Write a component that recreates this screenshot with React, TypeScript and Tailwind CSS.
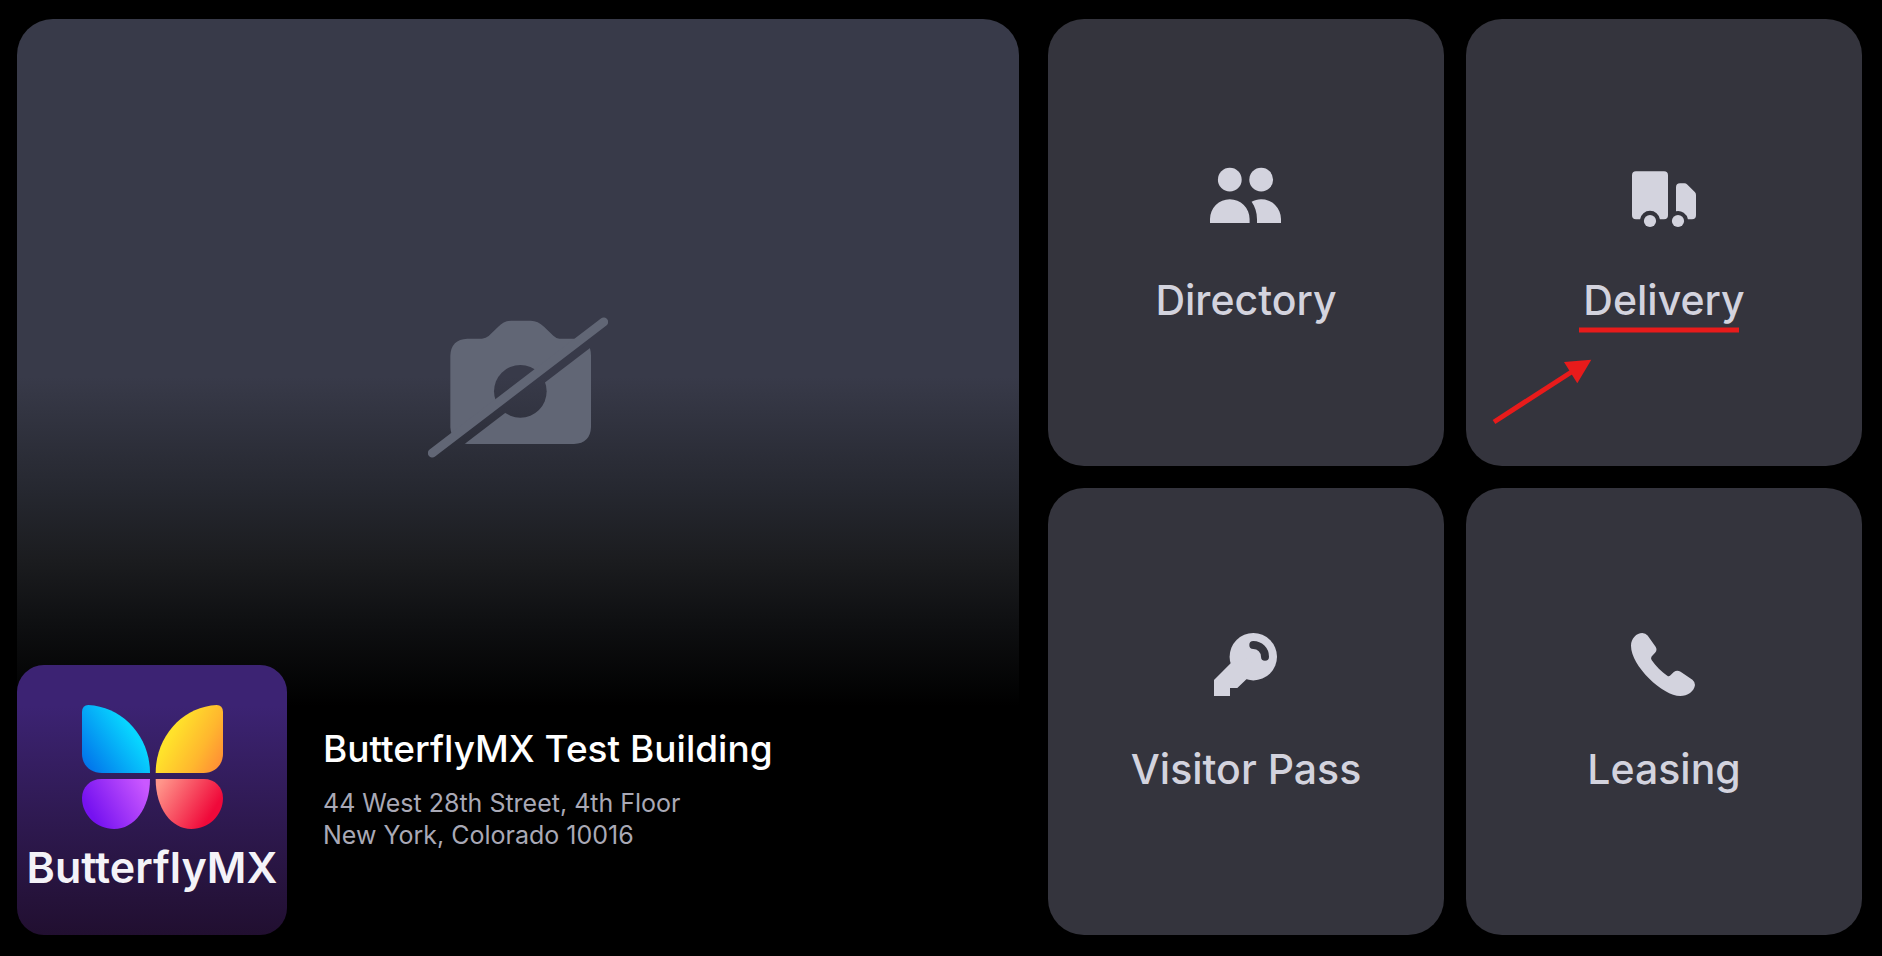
import type { ReactNode } from "react";

function CameraOffIcon() {
  return (
    <svg viewBox="54 51 540 423" className="h-[141px] w-[180px]" aria-hidden="true">
      <mask id="camera-cut" maskUnits="userSpaceOnUse" x="0" y="0" width="660" height="510">
        <rect width="660" height="510" fill="white" />
        <circle cx="331" cy="274" r="79" fill="black" />
        <path d="M28 512.5L620 59.5" stroke="black" strokeWidth="37" />
      </mask>
      <path
        mask="url(#camera-cut)"
        fill="#616675"
        d="M172 116H216Q228 115 236 108L264 81Q282 62 304 62H362Q384 62 402 80L430 107Q438 115 448 116H492Q543 118 543 167V382Q541 430 492 432H172Q124 430 121 382V167Q123 118 172 116Z"
      />
      <path d="M67 459L581 66" stroke="#616675" strokeWidth="27" strokeLinecap="round" />
    </svg>
  );
}

function ButterflyLogo() {
  return (
    <svg viewBox="243 165 423 372" className="h-[124px] w-[141px]" aria-hidden="true">
      <defs>
        <linearGradient id="wing-blue" gradientUnits="userSpaceOnUse" x1="250" y1="345" x2="395" y2="245">
          <stop offset="0" stopColor="#0273eb" />
          <stop offset="1" stopColor="#08d5ff" />
        </linearGradient>
        <linearGradient id="wing-yellow" gradientUnits="userSpaceOnUse" x1="515" y1="245" x2="665" y2="325">
          <stop offset="0" stopColor="#ffe22b" />
          <stop offset="0.6" stopColor="#ffb72e" />
          <stop offset="1" stopColor="#ff9134" />
        </linearGradient>
        <linearGradient id="wing-purple" gradientUnits="userSpaceOnUse" x1="270" y1="490" x2="430" y2="400">
          <stop offset="0" stopColor="#7612f0" />
          <stop offset="1" stopColor="#ca58ff" />
        </linearGradient>
        <linearGradient id="wing-red" gradientUnits="userSpaceOnUse" x1="480" y1="395" x2="632" y2="490">
          <stop offset="0" stopColor="#ff958a" />
          <stop offset="1" stopColor="#f0093a" />
        </linearGradient>
      </defs>
      <path fill="url(#wing-blue)" d="M243 185Q244 166 262 165C364 170 447 258 447 369H303C268 369 243 345 243 311Z" />
      <path fill="url(#wing-yellow)" d="M666 185Q665 166 647 165C546 170 464 258 464 369H608C641 369 666 345 666 311Z" />
      <path fill="url(#wing-purple)" d="M447 387C447 475 400 537 339 537C287 537 243 495 243 444C243 411 268 387 301 387Z" />
      <path fill="url(#wing-red)" d="M464 387C464 475 511 537 571 537C623 537 666 495 666 444C666 411 641 387 609 387Z" />
    </svg>
  );
}

function TileIcon({ children }: { children: ReactNode }) {
  return (
    <svg viewBox="0 0 96 96" className="size-24" fill="currentColor" aria-hidden="true">
      {children}
    </svg>
  );
}

const peopleIcon = (
  <TileIcon>
    <circle cx="31.8" cy="31.7" r="11.9" />
    <circle cx="63.2" cy="31.7" r="11.9" />
    <path d="M12 75V71A19.8 19.8 0 0 1 51.6 71V75Z" />
    <path d="M59 75V71.3C59 64.5 57 58.5 53.6 53.8C56.5 52.2 59.6 51.3 63 51.3A19.8 19.8 0 0 1 83 71V75Z" />
  </TileIcon>
);

const truckIcon = (
  <TileIcon>
    <path d="M20 23.3H48A4 4 0 0 1 52 27.3V67.3A4 4 0 0 1 48 71.3H43.9A10 10 0 0 0 24.1 71.3H20A4 4 0 0 1 16 67.3V27.3A4 4 0 0 1 20 23.3Z" />
    <path d="M60 63.2V39.3A4 4 0 0 1 64 35.3H68.4Q70 35.3 71.2 36.5L78.8 44.1Q80 45.3 80 46.9V67.3A4 4 0 0 1 76 71.3H71.9A10 10 0 0 0 60 63.2Z" />
    <circle cx="34" cy="73" r="6.1" />
    <circle cx="62" cy="73" r="6.1" />
  </TileIcon>
);

const keyIcon = (
  <TileIcon>
    <circle cx="55.3" cy="39.7" r="23.7" />
    <path d="M32.7 46.3L16 63V79H32V71H39.3L48.7 62L55 40Z" />
    <path d="M55.3 28A11.7 11.7 0 0 1 67 39.7" fill="none" stroke="#34343d" strokeWidth="8" strokeLinecap="round" />
  </TileIcon>
);

const phoneIcon = (
  <TileIcon>
    <path d="M26.3 16Q29.6 16 31.6 18.6L39.6 29.8Q41.5 32.8 39.3 35.6L35.6 39.4Q34.5 40.9 35.6 42.9C39.8 49.2 45.6 54.8 51.3 58.7Q52.8 59.8 54.2 58.6L57.8 55.1Q61 52.4 64.6 54.8L76.4 62.7Q79 64.8 79 68C78.2 74.5 71.5 79 64.3 79C47 79 15 49 15 28.7C15 21.5 20.5 16 26.3 16Z" />
  </TileIcon>
);

function DeliveryMarkup() {
  return (
    <svg viewBox="0 0 396 447" className="pointer-events-none absolute inset-0 size-full" aria-hidden="true">
      <path d="M113 311H273" stroke="#e81b1b" strokeWidth="5" />
      <path d="M28 403L107 352" stroke="#e81b1b" strokeWidth="5" />
      <path d="M125.3 340.7L98 343L111.3 364.3Z" fill="#e81b1b" />
    </svg>
  );
}

function ActionTile({ icon, label, children }: { icon: ReactNode; label: string; children?: ReactNode }) {
  return (
    <button
      type="button"
      className="relative flex flex-col items-center justify-center gap-8 rounded-[36px] bg-[#34343d] pb-3.5 text-[#d3d3de]"
    >
      {icon}
      <span className="text-[41px] leading-[48px] font-medium">{label}</span>
      {children}
    </button>
  );
}

export default function App() {
  return (
    <main className="grid min-h-screen grid-cols-[1002fr_814fr] gap-[29px] bg-black pt-[19px] pr-5 pb-[21px] pl-[17px] font-['Inter',sans-serif]">
      <section className="flex flex-col">
        <div className="flex flex-1 items-center justify-center rounded-[36px] bg-[linear-gradient(to_bottom,#383a49_49%,#25272f_65%,#1b1c1f_74%,#0e0f11_83%,#000000_94%)] pt-1.5">
          <CameraOffIcon />
        </div>
        <div className="relative -mt-[85px] flex h-[270px] gap-9">
          <div className="flex size-[270px] shrink-0 flex-col items-center rounded-[27px] bg-linear-to-b from-[#3c2373] from-15% to-[#210f30] pt-10">
            <ButterflyLogo />
            <span className="mt-3 text-[43px] leading-[52px] font-semibold text-[#f4f3f8]">ButterflyMX</span>
          </div>
          <div className="pt-[62px]">
            <h1 className="text-[37px] leading-[44px] font-medium text-white">ButterflyMX Test Building</h1>
            <p className="mt-4 text-[25px] leading-8 text-[#a9a9b6]">
              44 West 28th Street, 4th Floor
              <br />
              New York, Colorado 10016
            </p>
          </div>
        </div>
      </section>
      <nav aria-label="Actions" className="grid grid-cols-2 grid-rows-2 gap-[22px]">
        <ActionTile icon={peopleIcon} label="Directory" />
        <ActionTile icon={truckIcon} label="Delivery">
          <DeliveryMarkup />
        </ActionTile>
        <ActionTile icon={keyIcon} label="Visitor Pass" />
        <ActionTile icon={phoneIcon} label="Leasing" />
      </nav>
    </main>
  );
}
